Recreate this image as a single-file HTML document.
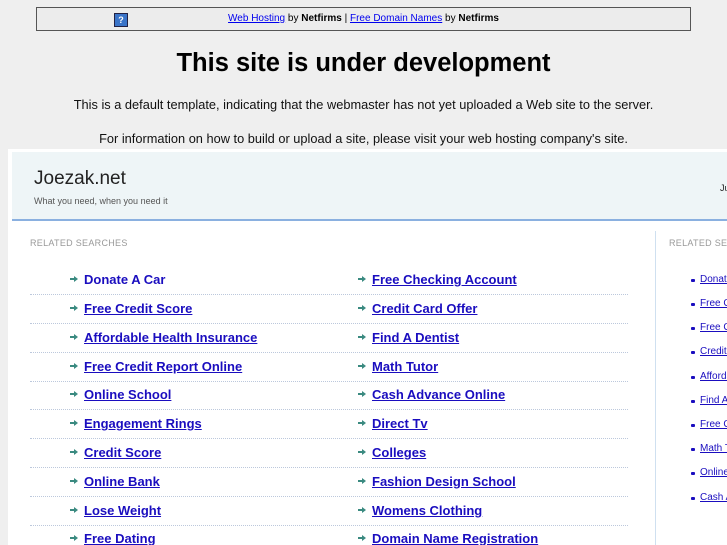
<!DOCTYPE html>
<html><head><style>
body{margin:0;width:727px;height:545px;overflow:hidden;background:#efefef;font-family:"Liberation Sans",sans-serif;position:relative}
.top{position:absolute;left:36px;top:7px;width:653px;height:22px;border:1px solid #555;background:#ececec;font-size:10px;text-align:center;line-height:22px;color:#000}
.top a{color:#00e;text-decoration:underline}
.q{position:absolute;left:77px;top:5px;width:12px;height:12px;background:#3a74c8;color:#fff;font-size:9px;line-height:12px;font-weight:bold;border:1px solid #224}
h1{position:absolute;top:48px;left:0;width:727px;text-align:center;margin:0;font-size:25.5px;line-height:30px}
.p{position:absolute;left:0;width:727px;text-align:center;font-size:12.8px;color:#111}
.panel{position:absolute;left:8px;top:149px;width:719px;height:396px;background:#fff;overflow:hidden}
.hd{position:absolute;left:4px;top:3px;width:715px;height:67px;background:#eef5f7;border-bottom:2px solid #8ab0e0}
.hd .t{position:absolute;left:22px;top:16px;font-size:19px;color:#222}
.hd .s{position:absolute;left:22px;top:44px;font-size:9px;color:#555}
.hd .j{position:absolute;left:708px;top:31px;font-size:9px;color:#222}
.rs{position:absolute;font-size:9px;color:#999;letter-spacing:.3px;white-space:nowrap}
.vl{position:absolute;left:647px;top:82px;width:1px;height:314px;background:#cfe0f0}
.row{position:absolute;left:22px;width:598px;height:28.8px;border-bottom:1px dotted #bcc8dc}
.it{position:absolute;font-size:13px;font-weight:bold;color:#1a0dbf;text-decoration:underline;white-space:nowrap}
.it:before{content:"";position:absolute;left:-14px;top:6px;width:5px;height:2px;background:#3a8a80}
.it:after{content:"";position:absolute;left:-10px;top:4px;border-left:4px solid #3a8a80;border-top:3px solid transparent;border-bottom:3px solid transparent}
.si{position:absolute;left:692px;font-size:10px;color:#1a0dbf;text-decoration:underline;white-space:nowrap}
.si:before{content:"";position:absolute;left:-9px;top:5px;width:4px;height:3px;background:#1a0dbf;border-radius:1px}
.clip{position:absolute;left:0;top:0;width:727px;height:545px;overflow:hidden}
</style></head><body>
<div class="top"><span class="q">?</span><a>Web Hosting</a> by <b>Netfirms</b> | <a>Free Domain Names</a> by <b>Netfirms</b></div>
<h1>This site is under development</h1>
<div class="p" style="top:97px">This is a default template, indicating that the webmaster has not yet uploaded a Web site to the server.</div>
<div class="p" style="top:131px">For information on how to build or upload a site, please visit your web hosting company's site.</div>
<div class="panel">
<div class="hd"><div class="t">Joezak.net</div><div class="s">What you need, when you need it</div><div class="j">Ju</div></div>
<div class="rs" style="left:22px;top:89px">RELATED SEARCHES</div>
<div class="rs" style="left:661px;top:89px">RELATED SEARCHES</div>
<div class="vl"></div>
<div class="row" style="top:116px"></div><div class="row" style="top:145px"></div><div class="row" style="top:174px"></div><div class="row" style="top:203px"></div><div class="row" style="top:231px"></div><div class="row" style="top:260px"></div><div class="row" style="top:289px"></div><div class="row" style="top:318px"></div><div class="row" style="top:347px"></div>
</div>
<div class="clip">
<div class="it" style="left:84px;top:272px;text-decoration:none">Donate A Car</div>
<div class="it" style="left:84px;top:301px">Free Credit Score</div>
<div class="it" style="left:84px;top:330px">Affordable Health Insurance</div>
<div class="it" style="left:84px;top:359px">Free Credit Report Online</div>
<div class="it" style="left:84px;top:387px">Online School</div>
<div class="it" style="left:84px;top:416px">Engagement Rings</div>
<div class="it" style="left:84px;top:445px">Credit Score</div>
<div class="it" style="left:84px;top:474px">Online Bank</div>
<div class="it" style="left:84px;top:503px">Lose Weight</div>
<div class="it" style="left:84px;top:531px">Free Dating</div>
<div class="it" style="left:372px;top:272px">Free Checking Account</div>
<div class="it" style="left:372px;top:301px">Credit Card Offer</div>
<div class="it" style="left:372px;top:330px">Find A Dentist</div>
<div class="it" style="left:372px;top:359px">Math Tutor</div>
<div class="it" style="left:372px;top:387px">Cash Advance Online</div>
<div class="it" style="left:372px;top:416px">Direct Tv</div>
<div class="it" style="left:372px;top:445px">Colleges</div>
<div class="it" style="left:372px;top:474px">Fashion Design School</div>
<div class="it" style="left:372px;top:503px">Womens Clothing</div>
<div class="it" style="left:372px;top:531px">Domain Name Registration</div>
<div class="si" style="left:700px;top:274px">Donate A Car</div>
<div class="si" style="left:700px;top:298px">Free Credit Score</div>
<div class="si" style="left:700px;top:322px">Free Credit Report</div>
<div class="si" style="left:700px;top:346px">Credit Score</div>
<div class="si" style="left:700px;top:371px">Affordable Health</div>
<div class="si" style="left:700px;top:395px">Find A Dentist</div>
<div class="si" style="left:700px;top:419px">Free Checking</div>
<div class="si" style="left:700px;top:443px">Math Tutor</div>
<div class="si" style="left:700px;top:467px">Online School</div>
<div class="si" style="left:700px;top:492px">Cash Advance</div>
</div>
</body></html>
